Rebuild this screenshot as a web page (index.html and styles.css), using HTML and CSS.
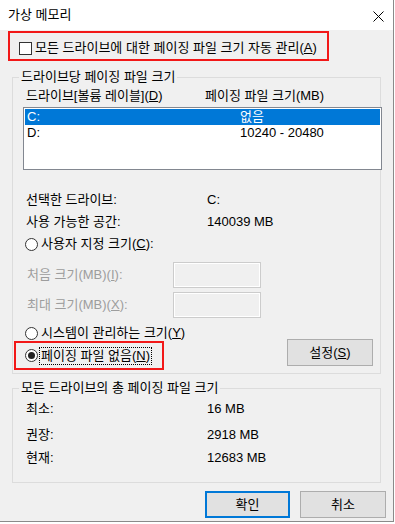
FILE: index.html
```html
<!DOCTYPE html>
<html lang="ko">
<head>
    <meta charset="UTF-8">
    <meta name="viewport" content="width=device-width, initial-scale=1.0">
    <title>가상 메모리</title>
    <link rel="stylesheet" href="styles.css">
</head>
<body>
    <div class="window">
        <div class="titlebar">
            <span class="title">가상 메모리</span>
            <svg class="close" width="11" height="11" viewBox="0 0 11 11">
                <path d="M0.5 0.5 L10.5 10.5 M10.5 0.5 L0.5 10.5" stroke="#000" stroke-width="1" fill="none"/>
            </svg>
        </div>

        <div class="auto-manage mark">
            <span class="checkbox"></span>
            <span>모든 드라이브에 대한 페이징 파일 크기 자동 관리(<u>A</u>)</span>
        </div>

        <fieldset class="group drives">
            <legend>드라이브당 페이징 파일 크기</legend>
            <div class="list-head">
                <span>드라이브[볼륨 레이블](<u>D</u>)</span>
                <span>페이징 파일 크기(MB)</span>
            </div>
            <div class="listbox">
                <div class="list-row selected"><span>C:</span><span>없음</span></div>
                <div class="list-row"><span>D:</span><span>10240 - 20480</span></div>
            </div>
            <div class="info">
                <div class="info-row"><span>선택한 드라이브:</span><span>C:</span></div>
                <div class="info-row"><span>사용 가능한 공간:</span><span>140039 MB</span></div>
            </div>
            <div class="radio-row custom"><span class="radio"></span><span>사용자 지정 크기(<u>C</u>):</span></div>
            <div class="size-row first"><span>처음 크기(MB)(<u>I</u>):</span><span class="textbox"></span></div>
            <div class="size-row"><span>최대 크기(MB)(<u>X</u>):</span><span class="textbox"></span></div>
            <div class="bottom">
                <div class="choices">
                    <div class="radio-row system"><span class="radio"></span><span>시스템이 관리하는 크기(<u>Y</u>)</span></div>
                    <div class="none-box mark">
                        <span class="radio on"></span>
                        <span class="focus">페이징 파일 없음(<u>N</u>)</span>
                    </div>
                </div>
                <button class="btn set">설정(<u>S</u>)</button>
            </div>
        </fieldset>

        <fieldset class="group totals">
            <legend>모든 드라이브의 총 페이징 파일 크기</legend>
            <div class="totals-grid">
                <span>최소:</span><span>16 MB</span>
                <span>권장:</span><span>2918 MB</span>
                <span>현재:</span><span>12683 MB</span>
            </div>
        </fieldset>

        <div class="actions">
            <button class="btn ok">확인</button>
            <button class="btn cancel">취소</button>
        </div>
    </div>
</body>
</html>
```

FILE: styles.css
```css
* {
    box-sizing: border-box;
}
body {
    margin: 0;
    background-color: #fff;
    font-family: "Liberation Sans", "Noto Sans CJK KR", sans-serif;
    font-size: 13px;
    line-height: 16px;
    color: #000;
}
u {
    text-underline-offset: 1px;
}
.window {
    width: 394px;
    height: 522px;
    background-color: #f0f0f0;
    border-right: 1px solid #8a8a8a;
    border-bottom: 1px solid #8a8a8a;
}
.titlebar {
    height: 30px;
    background-color: #fff;
    display: flex;
    align-items: center;
    justify-content: space-between;
    padding: 0 9px 0 8px;
}
.close {
    margin-top: 2px;
}
.mark {
    border: 2px solid #f21818;
}
.auto-manage {
    margin: 1px 0 0 8px;
    width: 321px;
    height: 30px;
    display: flex;
    align-items: center;
    gap: 3px;
    padding: 4px 0 0 9px;
    white-space: nowrap;
}
.checkbox {
    width: 13px;
    height: 13px;
    border: 1px solid #333;
    background-color: #fff;
    flex-shrink: 0;
}
.group {
    margin: 8px 0 0 12px;
    width: 369px;
    min-width: 0;
    border: 1px solid #dcdcdc;
    padding: 0 0 3px;
}
.group legend {
    margin-left: 6px;
    padding: 0 2px;
    line-height: 16px;
}
.list-head {
    display: grid;
    grid-template-columns: 179px auto;
    margin: 3px 0 0 13px;
}
.listbox {
    margin: 3px 0 0 10px;
    width: 359px;
    height: 63px;
    border: 1px solid #828790;
    background-color: #fff;
    padding: 1px;
}
.list-row {
    display: grid;
    grid-template-columns: 213px auto;
    height: 16px;
    line-height: 16px;
    padding-left: 2px;
}
.list-row.selected {
    background-color: #0078d7;
    color: #fff;
}
.info {
    margin-top: 19px;
}
.info-row {
    display: grid;
    grid-template-columns: 181px auto;
    height: 22px;
    align-items: center;
    padding-left: 13px;
}
.radio-row {
    display: flex;
    align-items: center;
    gap: 3px;
    height: 22px;
    padding-left: 12px;
    white-space: nowrap;
}
.radio {
    width: 13px;
    height: 13px;
    border: 1px solid #333;
    border-radius: 50%;
    background-color: #fff;
    display: grid;
    place-items: center;
    flex-shrink: 0;
}
.radio.on::after {
    content: "";
    width: 7px;
    height: 7px;
    border-radius: 50%;
    background-color: #222;
}
.size-row {
    display: grid;
    grid-template-columns: 146px 88px;
    align-items: center;
    height: 26px;
    margin-top: 4px;
    padding-left: 14px;
    color: #9d9d9d;
}
.size-row.first {
    margin-top: 7px;
}
.textbox {
    height: 26px;
    border: 1px solid #ccc;
    box-shadow: inset 0 0 0 1px #fff;
}
.bottom {
    display: flex;
    justify-content: space-between;
    align-items: flex-end;
}
.radio-row.system {
    height: 16px;
    margin-top: 7px;
}
.none-box {
    margin-left: 1px;
    width: 150px;
    height: 29px;
    display: flex;
    align-items: center;
    gap: 2px;
    padding-left: 9px;
    white-space: nowrap;
}
.focus {
    outline: 1px dotted #000;
    padding: 0 1px;
}
.btn {
    font: inherit;
    color: #000;
    background-color: #e1e1e1;
    border: 1px solid #adadad;
    height: 27px;
    padding: 0;
}
.btn.set {
    width: 86px;
    margin: 0 7px 4px 0;
}
.totals {
    margin-top: 6px;
    padding-bottom: 14px;
}
.totals-grid {
    display: grid;
    grid-template-columns: 181px auto;
    grid-template-rows: 26px 26px 20px;
    align-items: center;
    padding-left: 13px;
}
.actions {
    display: flex;
    justify-content: flex-end;
    gap: 10px;
    margin-top: 8px;
    padding-right: 7px;
}
.btn.ok {
    width: 85px;
    border: 2px solid #0078d7;
}
.btn.cancel {
    width: 86px;
}
```
